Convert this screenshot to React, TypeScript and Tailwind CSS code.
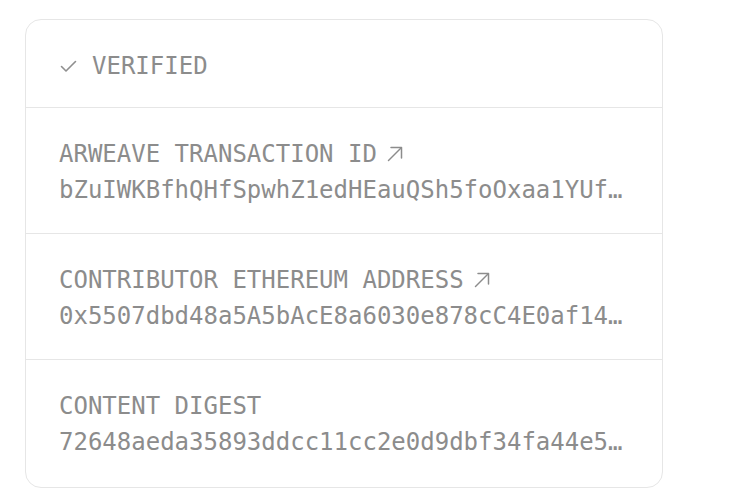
const rows = [
  {
    label: "ARWEAVE TRANSACTION ID",
    value: "bZuIWKBfhQHfSpwhZ1edHEauQSh5foOxaa1YUfk3Xq8",
    link: true,
  },
  {
    label: "CONTRIBUTOR ETHEREUM ADDRESS",
    value: "0x5507dbd48a5A5bAcE8a6030e878cC4E0af146b2C",
    link: true,
  },
  {
    label: "CONTENT DIGEST",
    value: "72648aeda35893ddcc11cc2e0d9dbf34fa44e5c0b1e7a9d2f4c3b8e6a1d0f9e2",
    link: false,
  },
];

function ArrowUpRight() {
  return (
    <svg width="16" height="16" viewBox="0 0 16 16" fill="none" stroke="currentColor" strokeWidth="1.5" strokeLinecap="round" strokeLinejoin="round">
      <path d="M1.5 14.5 14 2" />
      <path d="M4 1.5h10.5V12" />
    </svg>
  );
}

function Check() {
  return (
    <svg width="17" height="13" viewBox="0 0 17 13" fill="none" stroke="currentColor" strokeWidth="1.6" strokeLinecap="round" strokeLinejoin="round">
      <path d="M1.5 6.5 6 11 15.5 1.5" />
    </svg>
  );
}

export default function App() {
  return (
    <div className="min-h-[501px] bg-white pl-[25px] pt-[19px] font-['DejaVu_Sans_Mono','Liberation_Mono',monospace] text-[24px] text-[#8c8c8c]">
      <div className="w-[638px] rounded-[16px] border border-[#e6e6e6] bg-white">
        <div className="flex items-center border-b border-[#e6e6e6] pl-[34px] pt-[28px] pb-[23px] leading-[36px]">
          <span className="mr-[15px] text-[#8f8f8f]">
            <Check />
          </span>
          <span>VERIFIED</span>
        </div>
        {rows.map((row, i) => (
          <div
            key={row.label}
            className={`px-[33px] pt-[28px] leading-[36px] ${i < rows.length - 1 ? "border-b border-[#e6e6e6] pb-[25px]" : "pb-[27px]"}`}
          >
            <div className="flex items-center gap-[10px]">
              <span>{row.label}</span>
              {row.link && <ArrowUpRight />}
            </div>
            <div className="overflow-hidden text-ellipsis whitespace-nowrap">{row.value}</div>
          </div>
        ))}
      </div>
    </div>
  );
}
